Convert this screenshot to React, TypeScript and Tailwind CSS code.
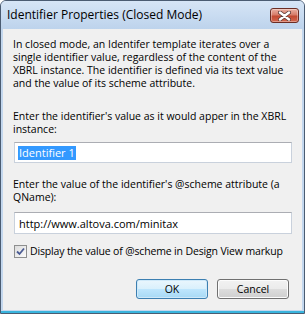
const ui = { fontFamily: '"Open Sans", "Noto Sans", sans-serif' };

function CloseButton() {
  return (
    <div className="flex h-[15px] w-[29px] items-center justify-center rounded-[3px] border border-[#6b2d24] bg-[linear-gradient(#eab0a2,#d67c69_45%,#c24a32_55%,#d2664e)] shadow-[inset_0_0_0_1px_rgba(255,255,255,0.35)]">
      <svg width="13" height="10" viewBox="0 0 13 10">
        <path d="M2 1.5 L11 8.5 M11 1.5 L2 8.5" stroke="#5a3a36" strokeWidth="4" strokeLinecap="round" />
        <path d="M2 1.5 L11 8.5 M11 1.5 L2 8.5" stroke="#ffffff" strokeWidth="2.4" strokeLinecap="round" />
      </svg>
    </div>
  );
}

function Check() {
  return (
    <span className="flex h-[13px] w-[13px] shrink-0 items-center justify-center border border-[#8e8f8f] bg-[linear-gradient(135deg,#dcdcdc,#fbfbfb)]">
      <svg width="9" height="9" viewBox="0 0 9 9">
        <path d="M1 4.5 L3.5 7 L8 1.5" fill="none" stroke="#4b5c94" strokeWidth="1.8" />
      </svg>
    </span>
  );
}

function Btn({ label, def }: { label: string; def?: boolean }) {
  return (
    <button
      className={`h-[20px] w-[72px] rounded-[3px] border text-[10.5px] text-black ${
        def
          ? "border-[#3c7fb1] bg-[linear-gradient(#eaf6fd,#d9f0fc_50%,#bee6fd_50%,#a7d9f5)] shadow-[inset_0_0_0_1px_#cfe9f9]"
          : "border-[#707070] bg-[linear-gradient(#f2f2f2,#ebebeb_50%,#dddddd_50%,#cfcfcf)] shadow-[inset_0_0_0_1px_#fcfcfc]"
      }`}
      style={ui}
    >
      {label}
    </button>
  );
}

export default function App() {
  return (
    <div className="flex h-[314px] w-[305px] flex-col overflow-hidden rounded-t-[6px] border border-[#4b5c72] bg-[#c3d7ee]" style={ui}>
      {/* title bar */}
      <div className="flex h-[28px] shrink-0 items-center justify-between bg-[linear-gradient(#d6e5f6,#bdd3ec)] pl-[6px] pr-[5px]">
        <span className="text-[12px] text-black">Identifier Properties (Closed Mode)</span>
        <div className="mt-[1px]">
          <CloseButton />
        </div>
      </div>

      {/* client area */}
      <div className="mx-[2px] mb-[1px] flex flex-1 flex-col bg-[#f0f0f0] px-[10px] pt-[9px] text-[10.5px] leading-[13px] text-black">
        <p>
          In closed mode, an Identifer template iterates over a<br />
          single identifier value, regardless of the content of the<br />
          XBRL instance. The identifier is defined via its text value<br />
          and the value of its scheme attribute.
        </p>

        <p className="mt-[20px]">
          Enter the identifier's value as it would apper in the XBRL
          <br />
          instance:
        </p>
        <div className="ml-[1px] mt-[6px] flex h-[21px] items-center border border-[#c9d1dc] border-t-[#abadb3] bg-white px-[3px]">
          <span className="bg-[#3399ff] px-px text-[11px] leading-[14px] text-white">Identifier 1</span>
        </div>

        <p className="mt-[15px]">
          Enter the value of the identifier's @scheme attribute (a
          <br />
          QName):
        </p>
        <div className="ml-[1px] mt-[8px] flex h-[22px] items-center border border-[#c9d1dc] border-t-[#abadb3] bg-white px-[4px]">
          <span className="text-[11px]">http://www.altova.com/minitax</span>
        </div>

        <label className="ml-[1px] mt-[11px] flex items-center gap-[3px]">
          <Check />
          <span className="tracking-[-0.15px]">Display the value of @scheme in Design View markup</span>
        </label>

        <div className="mt-[21px] flex justify-end gap-[9px] pr-[3px]">
          <Btn label="OK" def />
          <Btn label="Cancel" />
        </div>
      </div>
      <div className="h-[2px] shrink-0 bg-[#39b4dd]" />
    </div>
  );
}
